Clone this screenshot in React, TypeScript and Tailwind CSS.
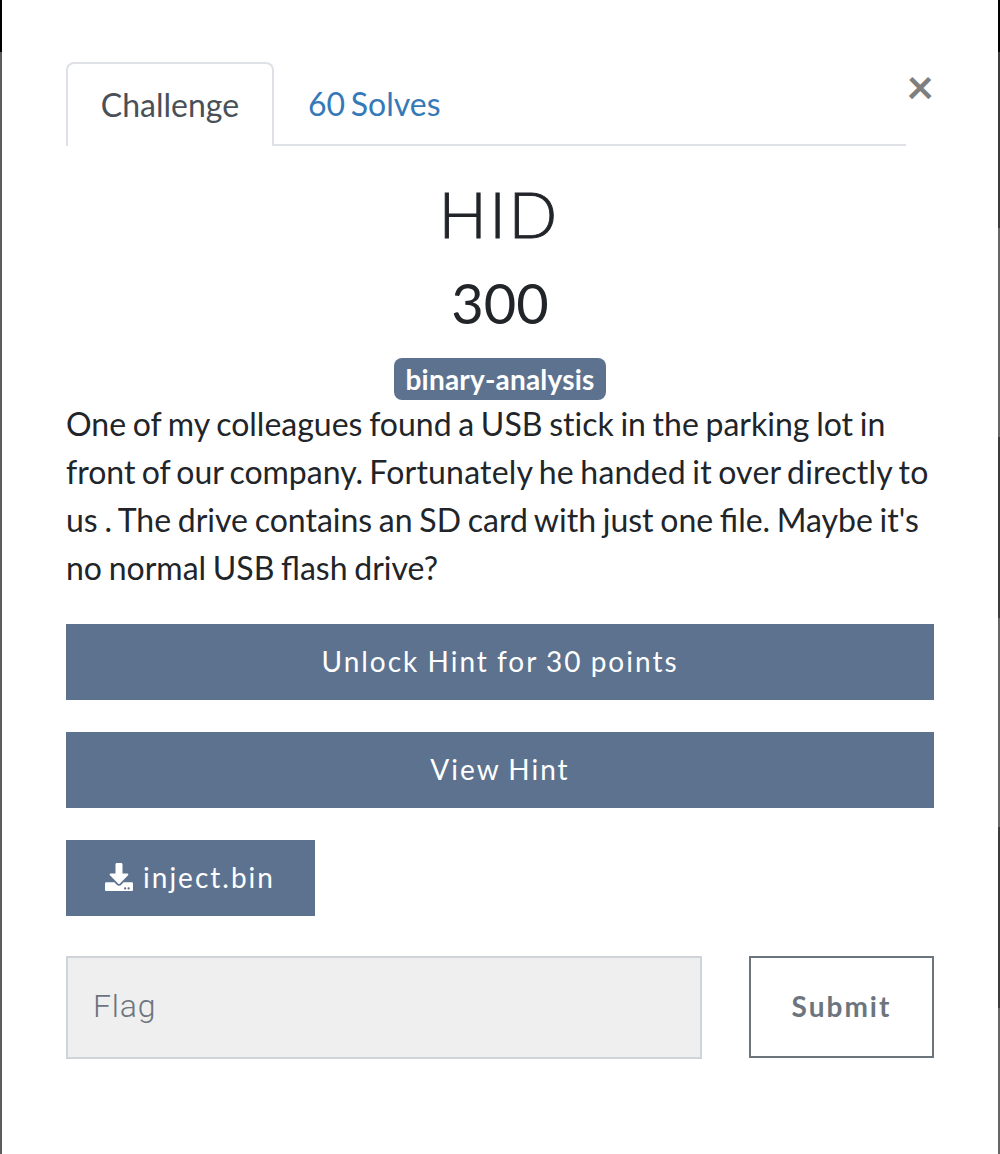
import { FaDownload } from "react-icons/fa";

const button =
  "flex h-[76px] items-center justify-center bg-[#5c728f] pb-[2px] text-[28px] tracking-[2px] text-white [word-spacing:-1px]";

export default function App() {
  return (
    <div className="flex h-[1154px] w-[1000px] bg-white font-['Lato',sans-serif] text-[32px] text-[#212529]">
      <div className="flex w-[2px] flex-col">
        <div className="h-[52px] bg-black" />
        <div className="flex-1 bg-[#5c5c5c]" />
      </div>
      <main className="w-[996px] px-16 pt-[62px]">
        <div className="flex h-[84px] items-stretch">
          <div className="flex w-[208px] items-center justify-center rounded-t-lg border-2 border-b-0 border-[#dee2e6] text-[#495057]">
            Challenge
          </div>
          <div className="flex w-[632px] items-center border-b-2 border-[#dee2e6] pt-[2px] pl-[34px] text-[#3579b8] [word-spacing:-2.5px]">
            60 Solves
          </div>
          <button className="ml-auto flex h-[48px] items-center text-[48px] leading-none font-bold text-[#7f7f7f]">×</button>
        </div>
        <h2 className="mt-[29px] mr-[2px] text-center text-[64px] leading-[77px] font-light tracking-[2.5px] [-webkit-text-stroke:0.9px_#212529]">
          HID
        </h2>
        <h3 className="mt-[17px] text-center text-[56px] leading-[67px]">300</h3>
        <div className="mt-[22px] flex justify-center">
          <span className="flex h-[42px] w-[212px] items-center justify-center rounded-lg bg-[#5c728f] pb-px text-[28px] font-bold tracking-[0.2px] text-white">
            binary-analysis
          </span>
        </div>
        <p className="leading-[48px] whitespace-nowrap [word-spacing:-1.5px]">
          <span className="[font-variant-ligatures:none]">One of my colleagues found a USB stick in the parking lot in</span>
          <br />
          <span className="[word-spacing:-2px]">
            front of our company. <span className="tracking-[0.2px]">Fortunately he handed it over directly to</span>
          </span>
          <br />
          us . The drive contains an SD card with just one file. Maybe it's
          <br />
          no normal USB flash drive?
        </p>
        <button className={`${button} mt-8 w-full`}>Unlock Hint for 30 points</button>
        <button className={`${button} mt-8 w-full`}>View Hint</button>
        <button className={`${button} mt-8 w-[249px] gap-[9px]`}>
          <FaDownload className="mr-px -ml-px size-7" />
          inject.bin
        </button>
        <div className="mt-10 flex justify-between">
          <input
            placeholder="Flag"
            className="h-[103px] w-[636px] rounded-none border-2 border-[#ced4da] bg-[#efefef] px-[25px] pb-[3px] font-['Roboto'] font-light tracking-[0.8px] placeholder:text-[#6c757d]"
          />
          <button className="h-[102px] w-[185px] border-2 border-[#6c757d] pb-[2px] text-[28px] font-bold tracking-[2px] text-[#6c757d]">
            Submit
          </button>
        </div>
      </main>
      <div className="flex w-[2px] flex-col">
        <div className="h-[52px] bg-black" />
        <div className="h-[176px] bg-[#3c3c3c]" />
        <div className="h-[209px] bg-[#666]" />
        <div className="h-[181px] bg-[#3c3c3c]" />
        <div className="h-[209px] bg-[#666]" />
        <div className="h-[181px] bg-[#3c3c3c]" />
        <div className="flex-1 bg-[#666]" />
      </div>
    </div>
  );
}
